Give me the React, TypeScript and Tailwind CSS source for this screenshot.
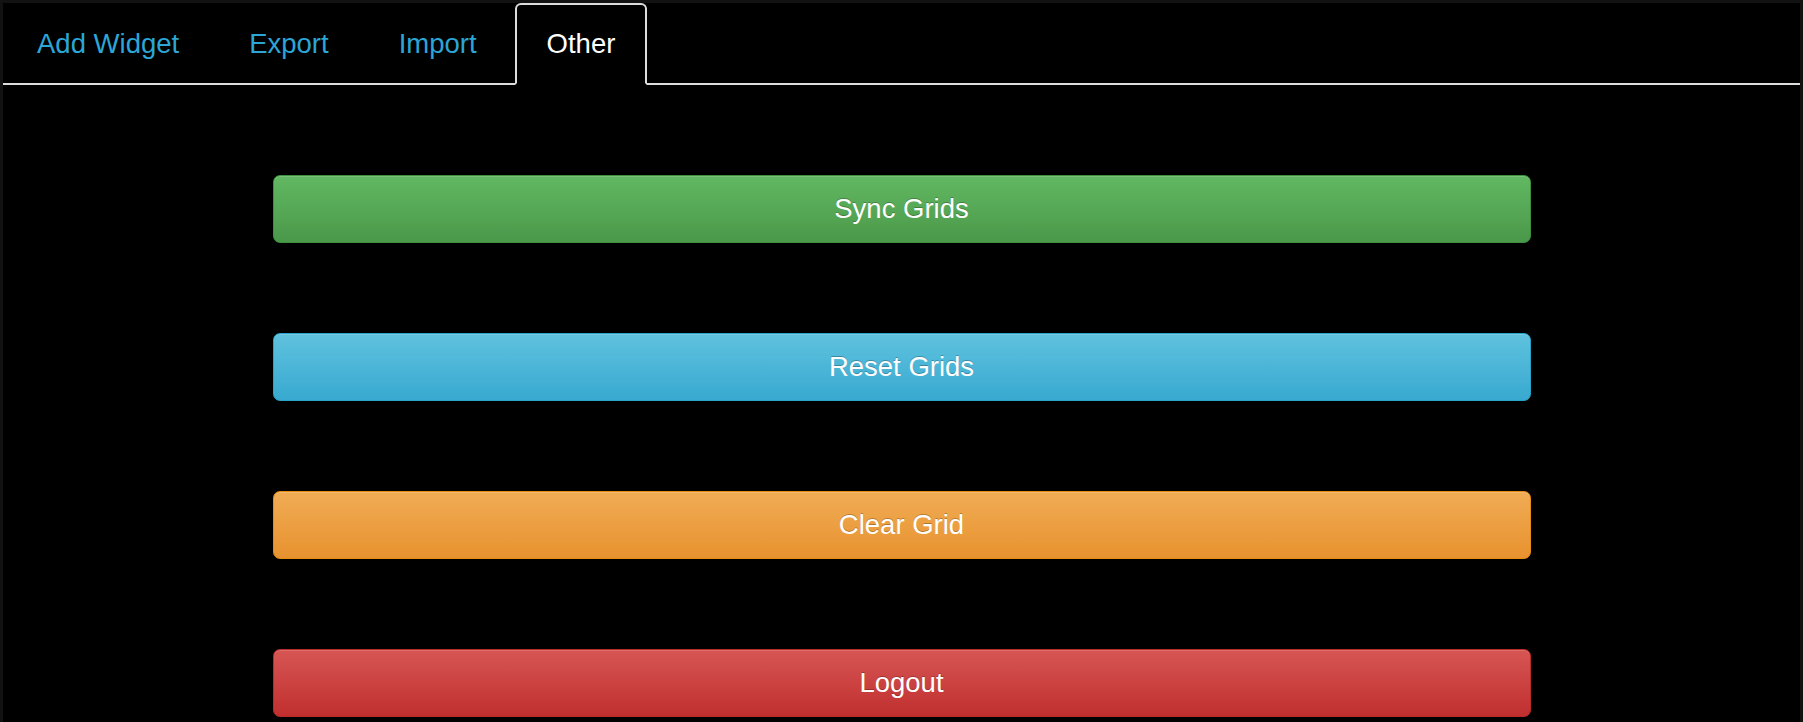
import React from "react";

const tabs = ["Add Widget", "Export", "Import", "Other"];
const active = "Other";

type Action = {
  label: string;
  cls: string;
};

const actions: Action[] = [
  {
    label: "Sync Grids",
    cls: "bg-[linear-gradient(to_bottom,#62b862_0%,#4a984a_100%)] border-[#3e8f3e]",
  },
  {
    label: "Reset Grids",
    cls: "bg-[linear-gradient(to_bottom,#5fc2de_0%,#38a9d0_100%)] border-[#28a4c9]",
  },
  {
    label: "Clear Grid",
    cls: "bg-[linear-gradient(to_bottom,#f0ac55_0%,#e8922f_100%)] border-[#e38d13]",
  },
  {
    label: "Logout",
    cls: "bg-[linear-gradient(to_bottom,#d65654_0%,#c02f2f_100%)] border-[#b92c28]",
  },
];

export default function App() {
  return (
    <div
      className="h-[722px] w-full overflow-hidden bg-[#121212] px-[3px] pt-[3px]"
      style={{ fontFamily: '"Liberation Sans", Arial, sans-serif' }}
    >
      <div className="h-full bg-black">
        {/* Tabs */}
        <ul className="flex border-b-2 border-[#dcdcdc] pl-[2px]">
          {tabs.map((t) => {
            const on = t === active;
            return (
              <li
                key={t}
                className={
                  on
                    ? "-mb-[2px] mr-[6px] flex h-[82px] items-center rounded-t-[6px] border-2 border-[#dcdcdc] border-b-transparent bg-black px-[30px] text-[27.5px] text-white"
                    : "-mb-[2px] mr-[6px] flex h-[82px] items-center border-2 border-transparent px-[30px] text-[27.5px] text-[#2ca6d6]"
                }
              >
                {t}
              </li>
            );
          })}
        </ul>

        {/* Actions */}
        <div className="flex flex-col items-center gap-[90px] pt-[90px]">
          {actions.map((a) => (
            <button
              key={a.label}
              className={`flex h-[68px] w-[1258px] items-center justify-center rounded-[7px] border text-[27.5px] text-white shadow-[inset_0_1px_0_rgba(255,255,255,0.15),0_1px_1px_rgba(0,0,0,0.075)] [text-shadow:0_-1px_0_rgba(0,0,0,0.25)] ${a.cls}`}
            >
              {a.label}
            </button>
          ))}
        </div>
      </div>
    </div>
  );
}
